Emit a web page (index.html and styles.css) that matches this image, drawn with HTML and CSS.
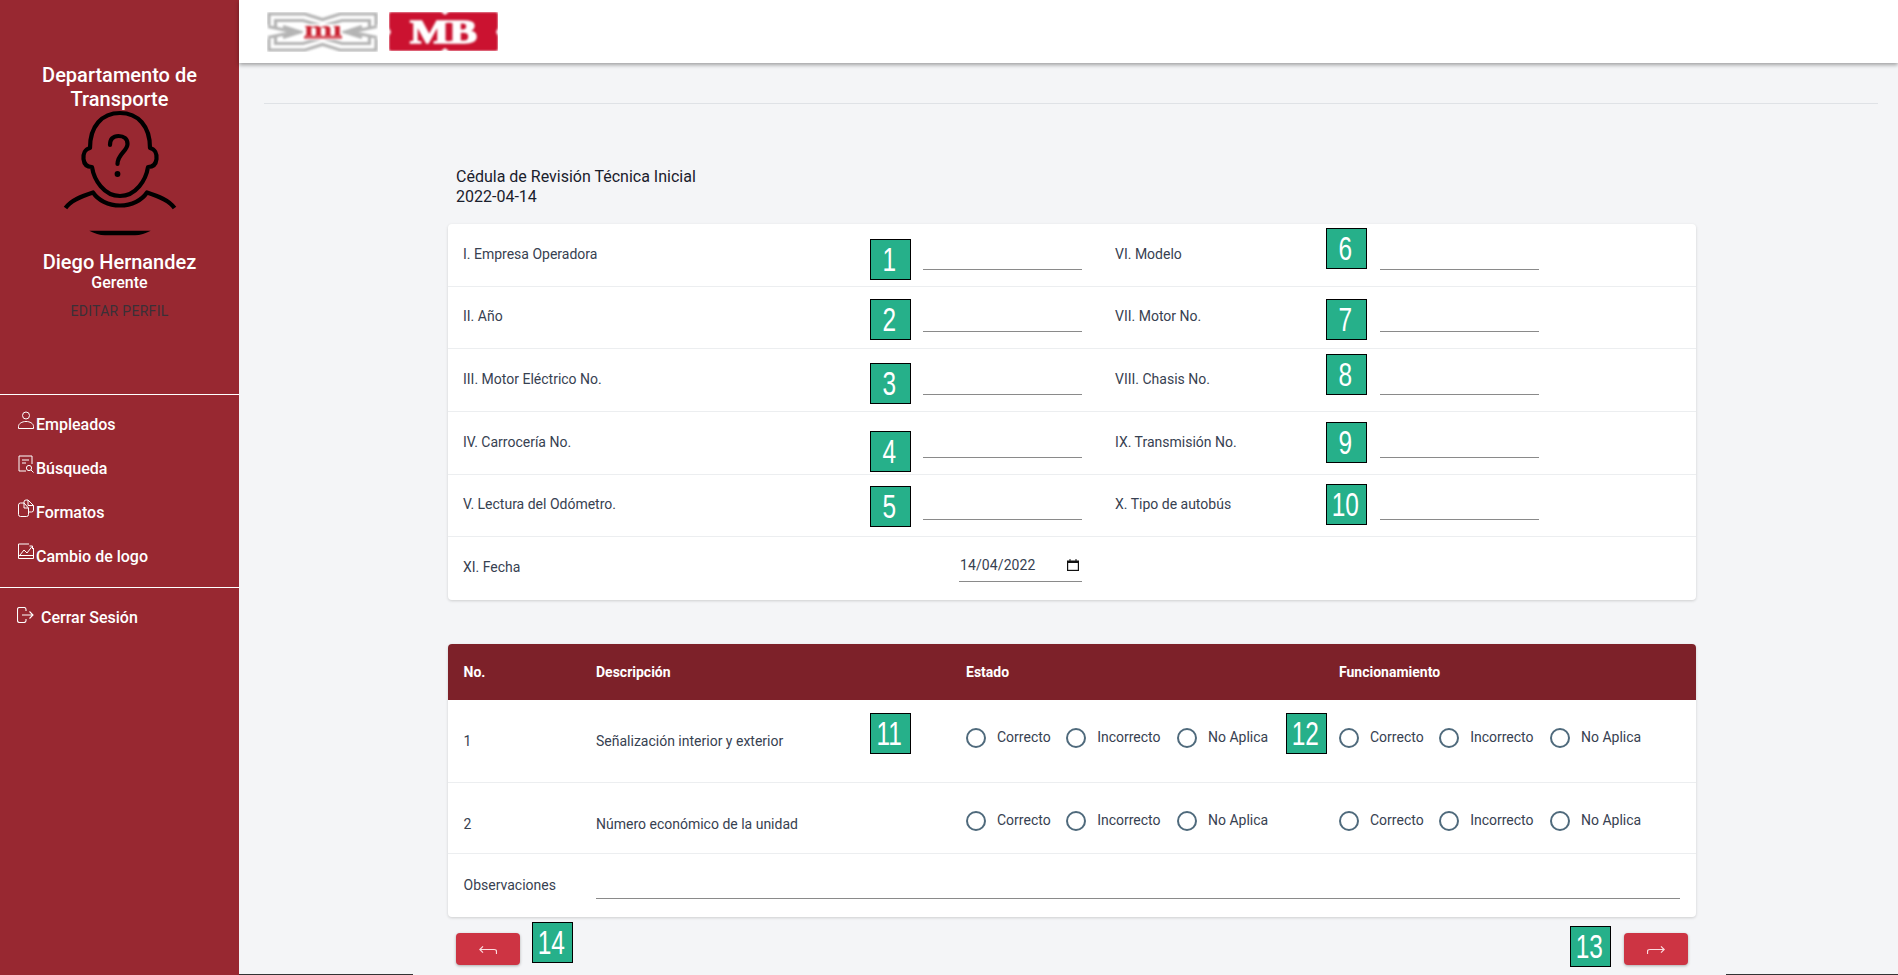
FILE: index.html
```html
<!DOCTYPE html>
<html lang="es">
<head>
<meta charset="utf-8">
<title>Cédula de Revisión Técnica Inicial</title>
<link rel="stylesheet" href="styles.css">
</head>
<body>
<div class="app">
  <aside class="sidebar">
    <h2 class="dept">Departamento de Transporte</h2>
    <svg class="avatar" viewBox="0 0 120 135" fill="none" stroke="#000" stroke-width="4.2" stroke-linecap="round" stroke-linejoin="round">
      <path d="M60 5C42 5 30 18 30 40C25 41 23 46 23.5 51C24 56 27 59 32 59C34 72 44 88 60 88C76 88 86 72 88 59C93 59 96 56 96.500 51C97 46 95 41 90 40C90 18 78 5 60 5Z"/>
      <path d="M5.500 100C11 92 22 88 33 84.500C38 92 48 97.500 60 97.500C72 97.500 82 92 87 84.500C98 88 109 92 114.500 100" stroke-linecap="butt"/>
      <path d="M50 37C50 31 53 28 58.500 28C64 28 67.500 31 67.500 36C67.500 43 57.500 46 57.500 56"/>
      <circle cx="57.500" cy="66" r="2.900" fill="#000" stroke="none"/>
      <path d="M29.300 122.700H90.700C86 125 80 127.300 75 127.300H45C40 127.300 34 125 29.300 122.700Z" fill="#000" stroke="none"/>
    </svg>
    <div class="user-name">Diego Hernandez</div>
    <div class="user-role">Gerente</div>
    <a class="edit-profile">EDITAR PERFIL</a>
    <nav class="nav">
      <a class="nav-item">
        <svg class="nav-icon" viewBox="0 0 16 18" fill="none" stroke="currentColor" stroke-width="1"><circle cx="8" cy="4.500" r="3.500"/><path d="M.5 17.500V15.500C.5 12.500 4 10.500 8 10.500S15.500 12.500 15.500 15.500V17.500Z"/></svg>
        <span>Empleados</span>
      </a>
      <a class="nav-item">
        <svg class="nav-icon" viewBox="0 0 16 18" fill="none" stroke="currentColor" stroke-width="1"><path d="M8 16H1V1H14V9"/><path d="M4 5H11M4 8H8"/><circle cx="11" cy="13" r="2.600"/><path d="M13 15L15.500 17.500"/></svg>
        <span>Búsqueda</span>
      </a>
      <a class="nav-item">
        <svg class="nav-icon" viewBox="0 0 16 18" fill="none" stroke="currentColor" stroke-width="1"><path d="M6 4H2.500Q.5 4 .5 6V15.500Q.5 17.500 2.500 17.500H8.500Q10.500 17.500 10.500 15.500V9L6 4V9H10.500"/><path d="M6 4V3Q6 1 8 1H10L15.500 6.500V11Q15.500 13 13.500 13H10.500M10 1V6.500H15.500"/></svg>
        <span>Formatos</span>
      </a>
      <a class="nav-item">
        <svg class="nav-icon" viewBox="0 0 16 18" fill="none" stroke="currentColor" stroke-width="1"><path d="M11 1H.5V15.500H15.500V5"/><path d="M2 12L6 7L9 10L14 3.500M11.500 3H14.500V6" /><path d="M.5 12.500H15.500"/></svg>
        <span>Cambio de logo</span>
      </a>
    </nav>
    <a class="logout">
      <svg class="nav-icon" viewBox="0 0 17 16" fill="none" stroke="currentColor" stroke-width="1.100"><path d="M9 4V2.500Q9 .5 7 .5H2.500Q.5 .5 .5 2.500V13.500Q.5 15.500 2.500 15.500H7Q9 15.500 9 13.500V12"/><path d="M5 8H16M12.500 4.500L16 8L12.500 11.500"/></svg>
      <span>Cerrar Sesión</span>
    </a>
  </aside>

  <main class="main">
    <header class="topbar">
      <svg class="logo-mi" viewBox="0 0 111 40">
        <g class="logo-blur-soft">
          <g fill="none" stroke="#b4b4b4" stroke-width="3.200">
            <path d="M2 13V2H38L55.500 7.500L73 2H109V13"/>
            <path d="M8.500 15V8.500H36L55.500 14L75 8.500H102.500V15"/>
            <path d="M2 27V38H38L55.500 32.500L73 38H109V27"/>
            <path d="M8.500 25V31.500H36L55.500 26L75 31.500H102.500V25"/>
            <path d="M1 14.500L27 20L1 25.500M110 14.500L84 20L110 25.500"/>
            <path d="M16 14.500L33 20L16 25.500M95 14.500L78 20L95 25.500"/>
          </g>
          <rect x="36" y="12" width="39" height="16" fill="#fff"/>
          <text class="logo-mi-text" x="37" y="23.500" textLength="38" lengthAdjust="spacingAndGlyphs">mı</text>
          <rect x="37" y="24.500" width="38" height="2" fill="#c9202f"/>
        </g>
      </svg>
      <svg class="logo-mb" viewBox="0 0 109 39">
        <g class="logo-blur">
          <path d="M2 0H52L56 3L60 0H107Q109 0 109 2V16L107 20L109 24V37Q109 39 107 39H60L56 36L52 39H2Q0 39 0 37V24L2 20L0 16V2Q0 0 2 0Z" fill="#cb1230"/>
          <text class="logo-mb-text" x="21" y="31" textLength="67" lengthAdjust="spacingAndGlyphs">MB</text>
        </g>
      </svg>
    </header>

    <div class="content">
      <hr class="rule">
      <section class="form-wrap">
        <h1 class="title">Cédula de Revisión Técnica Inicial<br>2022-04-14</h1>

        <div class="card info">
          <div class="info-row">
            <div class="cell left"><label>I. Empresa Operadora</label><input class="line" type="text"></div>
            <div class="cell right"><label>VI. Modelo</label><input class="line" type="text"></div>
          </div>
          <div class="info-row">
            <div class="cell left"><label>II. Año</label><input class="line" type="text"></div>
            <div class="cell right"><label>VII. Motor No.</label><input class="line" type="text"></div>
          </div>
          <div class="info-row">
            <div class="cell left"><label>III. Motor Eléctrico No.</label><input class="line" type="text"></div>
            <div class="cell right"><label>VIII. Chasis No.</label><input class="line" type="text"></div>
          </div>
          <div class="info-row">
            <div class="cell left"><label>IV. Carrocería No.</label><input class="line" type="text"></div>
            <div class="cell right"><label>IX. Transmisión No.</label><input class="line" type="text"></div>
          </div>
          <div class="info-row">
            <div class="cell left"><label>V. Lectura del Odómetro.</label><input class="line" type="text"></div>
            <div class="cell right"><label>X. Tipo de autobús</label><input class="line" type="text"></div>
          </div>
          <div class="info-row last">
            <div class="cell left"><label>XI. Fecha</label>
              <div class="date"><span>14/04/2022</span>
                <svg class="cal" viewBox="0 0 12 12"><path d="M0 1.500H2.500V0H3.500V1.500H8.500V0H9.500V1.500H12V12H0Z" fill="#111"/><rect x="1.200" y="4" width="9.600" height="6.800" fill="#fff"/></svg>
              </div>
            </div>
            <div class="cell right"></div>
          </div>
        </div>

        <div class="card check">
          <div class="check-row head">
            <div>No.</div><div>Descripción</div><div>Estado</div><div>Funcionamiento</div>
          </div>
          <div class="check-row item first">
            <div class="txt">1</div><div class="txt">Señalización interior y exterior</div>
            <div class="radios">
              <input class="radio" type="radio" name="e1"><label class="r1">Correcto</label>
              <input class="radio" type="radio" name="e1"><label class="r2">Incorrecto</label>
              <input class="radio" type="radio" name="e1"><label>No Aplica</label>
            </div>
            <div class="radios">
              <input class="radio" type="radio" name="f1"><label class="r1">Correcto</label>
              <input class="radio" type="radio" name="f1"><label class="r2">Incorrecto</label>
              <input class="radio" type="radio" name="f1"><label>No Aplica</label>
            </div>
          </div>
          <div class="check-row item second">
            <div class="txt">2</div><div class="txt">Número económico de la unidad</div>
            <div class="radios">
              <input class="radio" type="radio" name="e2"><label class="r1">Correcto</label>
              <input class="radio" type="radio" name="e2"><label class="r2">Incorrecto</label>
              <input class="radio" type="radio" name="e2"><label>No Aplica</label>
            </div>
            <div class="radios">
              <input class="radio" type="radio" name="f2"><label class="r1">Correcto</label>
              <input class="radio" type="radio" name="f2"><label class="r2">Incorrecto</label>
              <input class="radio" type="radio" name="f2"><label>No Aplica</label>
            </div>
          </div>
          <div class="obs-row">
            <label>Observaciones</label><input class="line wide" type="text">
          </div>
        </div>

        <div class="actions">
          <button class="btn" type="button" aria-label="Anterior">
            <svg class="arrow" viewBox="0 0 18 9" fill="none" stroke="currentColor" stroke-width="1.200"><path d="M17.500 9V6.500Q17.500 4.500 15 4.500H.8M4 1.300L.8 4.500L4 7.700" /></svg>
          </button>
          <button class="btn" type="button" aria-label="Siguiente">
            <svg class="arrow" viewBox="0 0 18 9" fill="none" stroke="currentColor" stroke-width="1.200"><path d="M.5 9V6.500Q.5 4.500 3 4.500H17.200M14 1.300L17.200 4.500L14 7.700"/></svg>
          </button>
        </div>
      </section>
    </div>
  </main>

  <div class="edge edge-a"></div>
  <div class="edge edge-b"></div>

  <div class="badge b1"><span>1</span></div>
  <div class="badge b2"><span>2</span></div>
  <div class="badge b3"><span>3</span></div>
  <div class="badge b4"><span>4</span></div>
  <div class="badge b5"><span>5</span></div>
  <div class="badge b6"><span>6</span></div>
  <div class="badge b7"><span>7</span></div>
  <div class="badge b8"><span>8</span></div>
  <div class="badge b9"><span>9</span></div>
  <div class="badge b10"><span>10</span></div>
  <div class="badge b11"><span>11</span></div>
  <div class="badge b12"><span>12</span></div>
  <div class="badge b13"><span>13</span></div>
  <div class="badge b14"><span>14</span></div>
</div>
</body>
</html>
```

FILE: styles.css
```css
* { box-sizing: border-box; }
html, body { margin: 0; height: 100%; overflow: hidden; }
body { font-family: Roboto, "Liberation Sans", sans-serif; color: #374151; background: #f4f5f7; font-size: 14px; }

.app { position: relative; display: flex; width: 1898px; height: 975px; overflow: hidden; }

/* sidebar */
.sidebar { flex: 0 0 239px; background: #982831; color: #fff; padding-top: 63px; display: flex; flex-direction: column; align-items: center; }
.dept { margin: 0; width: 190px; font-size: 20px; line-height: 24px; font-weight: 500; text-align: center; }
.avatar { display: block; width: 120px; height: 135px; margin-top: -3px; }
.user-name { font-size: 20px; line-height: 24px; font-weight: 500; margin-top: 7px; }
.user-role { font-size: 16px; line-height: 18px; font-weight: 500; }
.edit-profile { font-size: 14px; line-height: 18px; margin-top: 10px; color: #3a3037; letter-spacing: .3px; }
.nav { align-self: stretch; margin-top: 74px; padding: 5.500px 0 10.500px 18px; border-top: 1px solid #fff; border-bottom: 1px solid #fff; display: flex; flex-direction: column; }
.nav-item { display: flex; align-items: center; height: 44px; font-size: 16px; font-weight: 500; }
.nav-item span { margin-top: 3px; }
.nav-icon { display: block; width: 16px; height: 18px; margin-top: -5px; margin-right: 2px; flex: none; }
.logout { align-self: stretch; display: flex; align-items: center; height: 58px; padding-left: 17px; font-size: 16px; font-weight: 500; }
.logout .nav-icon { height: 16px; width: 17px; margin-right: 7px; margin-top: -4px; }

/* main */
.main { flex: 1; min-width: 0; display: flex; flex-direction: column; }
.topbar { height: 63px; flex: none; background: #fff; box-shadow: 0 2px 4px rgba(0,0,0,.35); padding: 12px 0 0 28px; display: flex; align-items: flex-start; gap: 11px; position: relative; }
.logo-mi { width: 111px; height: 40px; display: block; }
.logo-mb { width: 109px; height: 39px; display: block; }
.logo-blur { filter: blur(.8px); }
.logo-blur-soft { filter: blur(1px); }
.logo-mi-text { font-family: "Liberation Serif", serif; font-weight: 700; font-size: 20px; fill: #c9202f; }
.logo-mb-text { font-family: "Liberation Serif", serif; font-weight: 700; font-size: 34px; fill: #fff; stroke: #fff; stroke-width: 1.500px; }

.content { flex: 1; padding: 40px 20px 0 25px; }
.rule { margin: 0; border: 0; border-top: 1px solid #dfe2e6; }
.form-wrap { margin: 63px 0 0 184px; width: 1248px; }
.title { margin: 0 0 17px 8px; font-size: 16px; line-height: 20px; font-weight: 400; color: #1a202c; }

.card { background: #fff; border-radius: 4px; box-shadow: 0 1px 3px rgba(0,0,0,.16); }
.info { height: 376px; margin-bottom: 44px; }
.info-row { display: grid; grid-template-columns: 651px 597px; height: 62.667px; border-bottom: 1px solid #eceef0; }
.info-row.last { border-bottom: 0; height: 62px; }
.cell { display: flex; justify-content: space-between; align-items: center; position: relative; height: 100%; }
.cell.left { padding: 0 17px 0 15px; }
.cell.right { padding: 0 0 0 16px; justify-content: flex-start; }
.cell.right label { width: 265px; }
.cell label { margin-top: -2px; }
.line { display: block; width: 159px; height: 38px; align-self: flex-end; margin-bottom: 16px; border: 0; border-bottom: 1px solid #8a8a8a; background: transparent; padding: 0; outline: 0; font: inherit; }
.date { width: 123px; height: 38px; align-self: flex-end; margin-bottom: 17px; padding: 5px 3px 0 1px; border-bottom: 1px solid #8a8a8a; display: flex; align-items: center; justify-content: space-between; }
.date span { letter-spacing: .1px; }
.cal { width: 12px; height: 12px; display: block; }

.check { height: 273px; }
.check-row { display: grid; grid-template-columns: 132.500px 370px 373px 1fr; padding-left: 15.500px; }
.head { height: 56px; align-items: center; background: #7d2129; color: #fff; font-weight: 700; border-radius: 4px 4px 0 0; }
.item { border-bottom: 1px solid #eceef0; align-items: start; }
.item.first { height: 83px; }
.item.second { height: 71px; }
.txt { line-height: 20px; padding-top: 31px; }
.radios { display: flex; align-items: center; height: 20px; margin-top: 28px; }
.radio { appearance: none; -webkit-appearance: none; width: 20px; height: 20px; margin: 0 11px 0 0; border: 2px solid #4f6a7c; border-radius: 50%; background: #fff; flex: none; }
.radios label { margin-top: -2px; }
.radios label.r1 { margin-right: 15.500px; }
.radios label.r2 { margin-right: 16.500px; }
.obs-row { display: grid; grid-template-columns: 132.500px 1084px; padding-left: 15.500px; height: 63px; align-items: start; }
.obs-row label { line-height: 20px; padding-top: 21px; }
.line.wide { width: 100%; height: 36px; margin: 9px 0 0; align-self: start; }

.actions { display: flex; justify-content: space-between; padding: 16px 8px 0; }
.btn { width: 64px; height: 32px; background: #cd3443; color: #fbdde0; border: 0; border-radius: 4px; box-shadow: 0 1px 3px rgba(0,0,0,.3); padding: 0; display: flex; align-items: center; justify-content: center; }
.arrow { width: 18px; height: 9px; display: block; }

/* bottom edge */
.edge { position: absolute; bottom: 0; height: 1px; background: #333; }
.edge-a { left: 239px; width: 174px; }
.edge-b { left: 1726px; right: 0; }

/* annotation badges */
.badge { position: absolute; width: 41px; height: 41px; background: #26b08a; border: 1.500px solid #000; color: #fff; font-family: "Liberation Sans", sans-serif; font-size: 33px; display: flex; align-items: center; justify-content: center; overflow: hidden; }
.badge span { display: block; transform: translateX(-1px) scaleX(.74); line-height: 1; }
.b1 { left: 870px; top: 239px; }
.b2 { left: 870px; top: 299px; }
.b3 { left: 870px; top: 363px; }
.b4 { left: 870px; top: 431px; }
.b5 { left: 870px; top: 486px; }
.b6 { left: 1326px; top: 228px; }
.b7 { left: 1326px; top: 299px; }
.b8 { left: 1326px; top: 354px; }
.b9 { left: 1326px; top: 422px; }
.b10 { left: 1326px; top: 484px; }
.b11 { left: 870px; top: 713px; }
.b12 { left: 1286px; top: 713px; }
.b13 { left: 1570px; top: 926px; }
.b14 { left: 532px; top: 922px; }
```
